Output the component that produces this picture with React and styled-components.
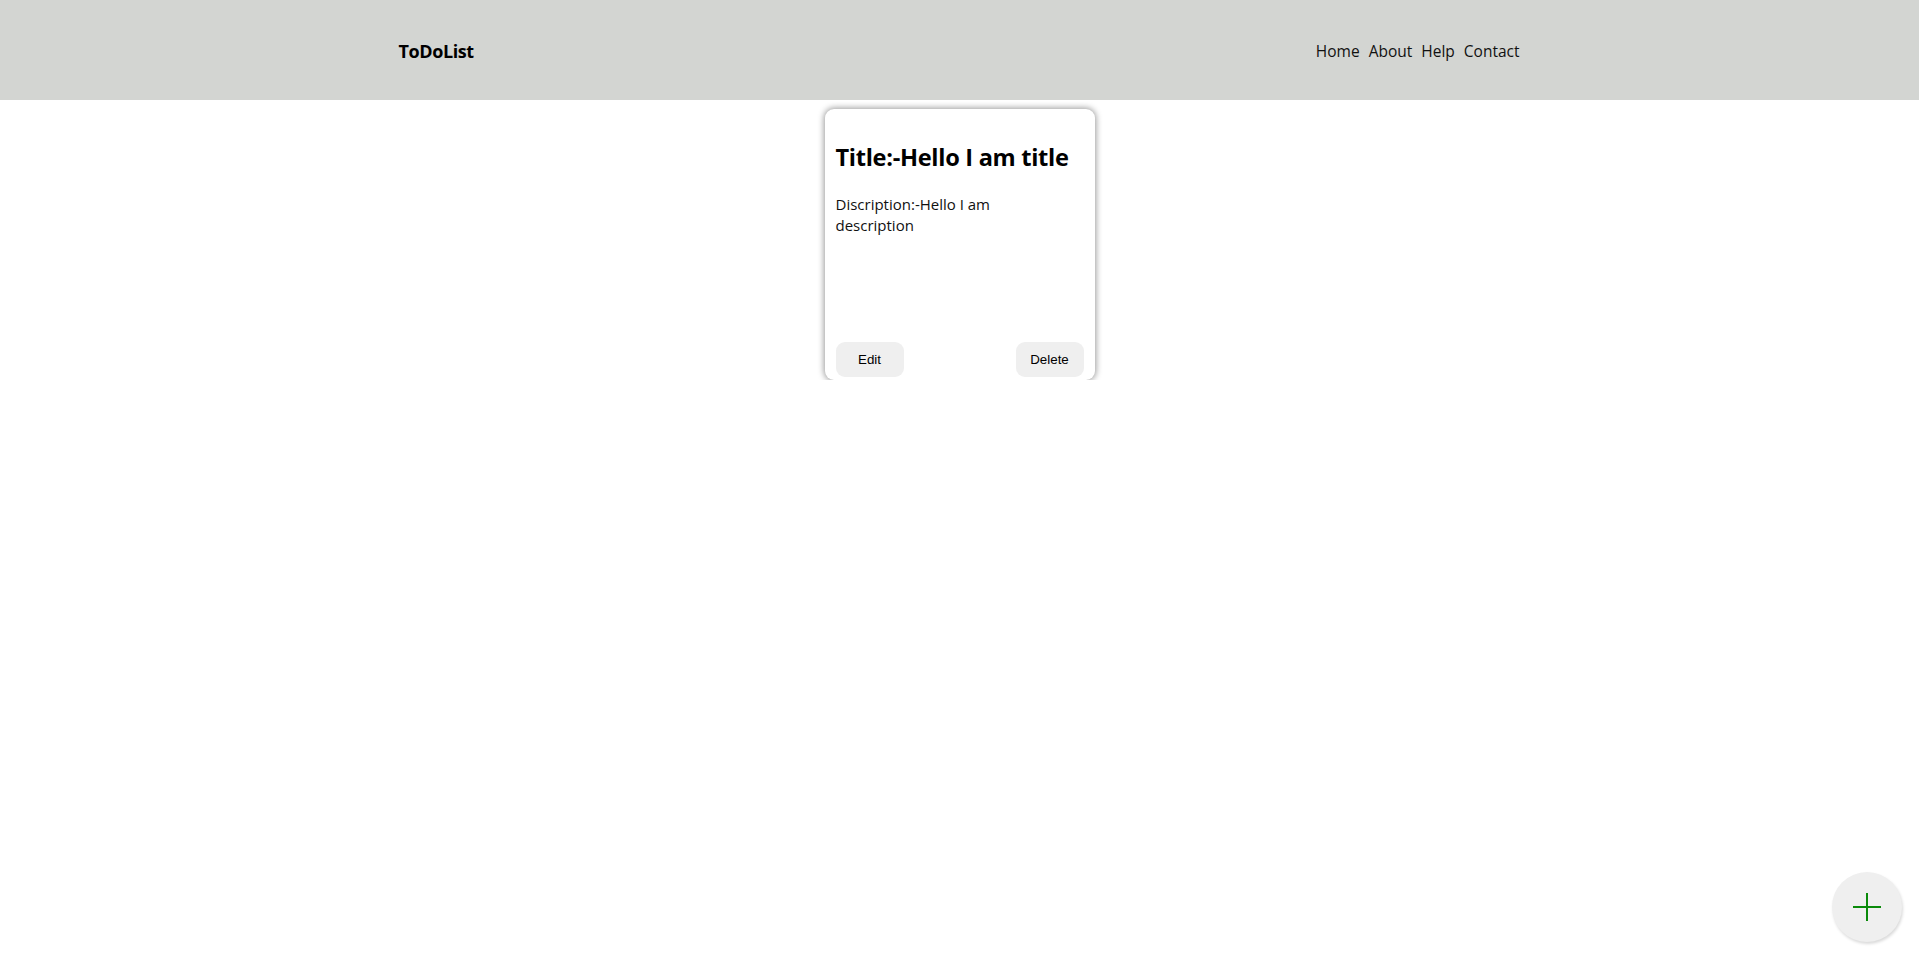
import React from "react";
import styled, {createGlobalStyle} from "styled-components";

const GlobalStyle = createGlobalStyle`
	body {
		margin: 0;
		font-family: "Open Sans", "Noto Sans", sans-serif;
		background: #fff;
		color: #000;
	}
`;

const Header = styled.header`
	height: 100px;
	background: #d3d5d2;
	display: flex;
	align-items: center;
`;

const Bar = styled.div`
	width: 1120px;
	margin: 0 auto;
	display: flex;
	align-items: center;
	justify-content: space-between;
	padding-top: 2px;
`;

const Logo = styled.div`
	font-size: 18px;
	font-weight: 700;
	letter-spacing: -0.4px;
	margin-left: -1px;
`;

const Nav = styled.nav`
	display: flex;
	gap: 9px;
	font-size: 15.5px;
	color: #111;
`;

const NavItem = styled.span`
	cursor: pointer;
`;

const Main = styled.main`
	display: flex;
	justify-content: center;
	padding-top: 9px;
`;

const Card = styled.div`
	width: 270px;
	height: 271px;
	box-sizing: border-box;
	padding: 11px 11px 3px;
	border-radius: 9px;
	background: #fff;
	box-shadow: 0 0 6px 1px #9a9a9a;
	display: flex;
	flex-direction: column;
`;

const Title = styled.h2`
	font-size: 23.6px;
	font-weight: 700;
	margin: 21px 0 21px;
	line-height: 32px;
	letter-spacing: -0.3px;
	white-space: nowrap;
`;

const Desc = styled.p`
	font-size: 15px;
	line-height: 21px;
	margin: 0;
	width: 175px;
	flex: 1;
	color: #111;
`;

const Actions = styled.div`
	display: flex;
	justify-content: space-between;
`;

const Button = styled.button`
	width: 68px;
	height: 35px;
	border: none;
	border-radius: 9px;
	background: #efefef;
	font-family: "Liberation Sans", Arial, sans-serif;
	font-size: 13.33px;
	color: #000;
	cursor: pointer;
`;

const Fab = styled.button`
	position: fixed;
	right: 17px;
	bottom: 15px;
	width: 70px;
	height: 70px;
	border-radius: 50%;
	border: none;
	background: #efefef;
	box-shadow: 1px 2px 3px rgba(0, 0, 0, 0.15);
	display: flex;
	align-items: center;
	justify-content: center;
	cursor: pointer;
	padding: 0;
`;

export default function App() {
	return (
		<>
			<GlobalStyle />
			<Header>
				<Bar>
					<Logo>ToDoList</Logo>
					<Nav>
						<NavItem>Home</NavItem>
						<NavItem>About</NavItem>
						<NavItem>Help</NavItem>
						<NavItem>Contact</NavItem>
					</Nav>
				</Bar>
			</Header>
			<Main>
				<Card>
					<Title>Title:-Hello I am title</Title>
					<Desc>Discription:-Hello I am description</Desc>
					<Actions>
						<Button>Edit</Button>
						<Button>Delete</Button>
					</Actions>
				</Card>
			</Main>
			<Fab>
				<svg width="30" height="30" viewBox="0 0 30 30">
					<path d="M15 1v28M1 15h28" stroke="#0a8a0a" strokeWidth="2" />
				</svg>
			</Fab>
		</>
	);
}
